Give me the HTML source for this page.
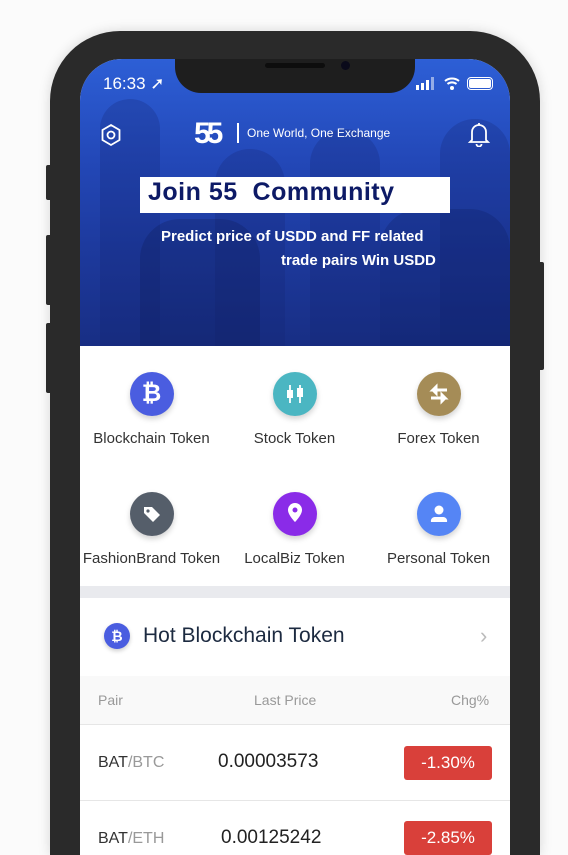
<!DOCTYPE html>
<html style="width:568px;height:855px;overflow:hidden"><head><meta charset="utf-8"><style>
*{margin:0;padding:0;box-sizing:border-box}
body{width:568px;height:855px;overflow:hidden;background:#fbfbfb;font-family:"Liberation Sans",sans-serif;position:relative}
.frame{position:absolute;left:50px;top:31px;width:490px;height:824px;background:#2a2a2a;border-radius:70px 70px 0 0;box-shadow:0 0 12px rgba(0,0,0,.15)}
.btn{position:absolute;background:#2a2a2a;width:6px;border-radius:2px}
.screen{position:absolute;left:80px;top:59px;width:430px;height:796px;background:#fff;border-radius:42px 42px 0 0;overflow:hidden}
.banner{position:absolute;left:0;top:0;width:430px;height:287px;overflow:hidden;background:linear-gradient(180deg,#2d5fd6 0%,#2348b8 35%,#1d3a9e 65%,#182e84 100%)}
.banner .sil{position:absolute;background:rgba(20,35,110,.25);border-radius:40px 40px 0 0}
.notch{position:absolute;left:95px;top:-2px;width:240px;height:36px;background:#1e1e1e;border-radius:0 0 26px 26px}
.w{color:#fff;position:absolute}
.icons{position:absolute;top:287px;left:0;width:430px}
.it{position:absolute;width:143px;text-align:center;font-size:15px;color:#333}
.ic{width:44px;height:44px;border-radius:50%;margin:0 auto 14px;display:flex;align-items:center;justify-content:center;box-shadow:0 3px 6px rgba(0,0,0,.18)}
</style></head><body>
<div class="frame"></div>
<div class="btn" style="left:46px;top:165px;height:35px"></div>
<div class="btn" style="left:46px;top:235px;height:70px"></div>
<div class="btn" style="left:46px;top:323px;height:70px"></div>
<div class="btn" style="left:538px;top:262px;height:108px"></div>
<div class="screen">
 <div class="banner">
  <div class="sil" style="left:20px;top:40px;width:60px;height:250px"></div>
  <div class="sil" style="left:135px;top:90px;width:70px;height:200px"></div>
  <div class="sil" style="left:230px;top:70px;width:70px;height:220px"></div>
  <div class="sil" style="left:360px;top:60px;width:70px;height:230px"></div>
  <div class="sil" style="left:60px;top:160px;width:120px;height:130px;background:rgba(10,25,80,.25)"></div>
  <div class="sil" style="left:300px;top:150px;width:130px;height:140px;background:rgba(10,25,80,.22)"></div>
 </div>
 <div class="notch"><div style="position:absolute;left:90px;top:6px;width:60px;height:5px;border-radius:3px;background:#0d0d0d"></div><div style="position:absolute;left:166px;top:4px;width:9px;height:9px;border-radius:50%;background:#0a0a1a"></div></div>
 <div class="w" style="left:23px;top:15px;font-size:17px">16:33 ➚</div>
 <svg class="w" style="left:336px;top:18px" width="60" height="14"><rect x="0" y="8" width="3" height="5" fill="#fff"/><rect x="5" y="6" width="3" height="7" fill="#fff"/><rect x="10" y="3" width="3" height="10" fill="#fff"/><rect x="15" y="0" width="3" height="13" fill="#fff" opacity=".5"/><path d="M29 4a11 11 0 0 1 14 0M31.5 7a7 7 0 0 1 9 0" stroke="#fff" stroke-width="2" fill="none"/><circle cx="36" cy="11" r="2" fill="#fff"/></svg>
 <div class="w" style="left:387px;top:18px;width:26px;height:13px;border:1.5px solid #fff;border-radius:4px;padding:1px"><div style="background:#fff;width:100%;height:100%;border-radius:2px"></div></div>
 <svg class="w" style="left:20px;top:64px" width="22" height="24"><path d="M11 2l8.5 5v10L11 22 2.5 17V7z" stroke="#fff" stroke-width="1.8" fill="none"/><circle cx="11" cy="12" r="3.5" stroke="#fff" stroke-width="1.8" fill="none"/></svg>
 <div class="w" style="left:114px;top:58px;font-size:30px;font-weight:bold;letter-spacing:-4px">55</div>
 <div class="w" style="left:157px;top:64px;width:1.5px;height:20px;background:#fff"></div>
 <div class="w" style="left:167px;top:67px;font-size:12px">One World, One Exchange</div>
 <svg class="w" style="left:387px;top:62px" width="24" height="26"><path d="M12 2v2M5 19V11a7 7 0 0 1 14 0v8l2 2H3z" stroke="#fff" stroke-width="1.8" fill="none"/><path d="M9.5 23a2.5 2.5 0 0 0 5 0" stroke="#fff" stroke-width="1.8" fill="none"/></svg>
 <div style="position:absolute;left:60px;top:118px;width:310px;height:36px;background:#fff"></div>
 <div style="position:absolute;left:68px;top:119px;font-size:25px;font-weight:bold;color:#0d1a66;letter-spacing:.5px;white-space:pre">Join 55  Community</div>
 <div class="w" style="left:81px;top:169px;font-size:15px;font-weight:bold">Predict  price of USDD and FF related</div>
 <div class="w" style="left:201px;top:193px;font-size:15px;font-weight:bold">trade pairs Win  USDD</div>
 <div class="icons">
  <div class="it" style="left:0;top:26px"><div class="ic" style="background:#4a5de0;color:#fff;font-weight:bold;font-size:24px">₿</div>Blockchain Token</div>
  <div class="it" style="left:143px;top:26px"><div class="ic" style="background:#4bb6c2"><svg width="24" height="24"><path d="M7 3v18M17 3v18" stroke="#fff" stroke-width="1.8"/><rect x="4" y="8" width="6" height="8" fill="#fff"/><rect x="14" y="6" width="6" height="9" fill="#fff"/></svg></div>Stock Token</div>
  <div class="it" style="left:287px;top:26px"><div class="ic" style="background:#a58c57"><svg width="24" height="22"><path d="M20 7H6l3-3v6l-3-3M4 15h14l-3-3v6l3-3" stroke="#fff" stroke-width="3" fill="none"/></svg></div>Forex Token</div>
  <div class="it" style="left:0;top:146px"><div class="ic" style="background:#555e6a"><svg width="24" height="24"><path d="M4 5h8l8 8-7 7-9-9z" fill="#fff"/><circle cx="8" cy="9" r="1.6" fill="#555e6a"/></svg></div>FashionBrand Token</div>
  <div class="it" style="left:143px;top:146px"><div class="ic" style="background:#8a2be8"><svg width="24" height="26"><path d="M12 21s-7-7-7-12a7 7 0 0 1 14 0c0 5-7 12-7 12z" fill="#fff"/><circle cx="12" cy="9" r="2.5" fill="#8a2be8"/></svg></div>LocalBiz Token</div>
  <div class="it" style="left:287px;top:146px"><div class="ic" style="background:#5585f5"><svg width="24" height="24"><circle cx="12" cy="8" r="4.5" fill="#fff"/><path d="M4 20a4 4 0 0 1 4-5h8a4 4 0 0 1 4 5z" fill="#fff"/></svg></div>Personal Token</div>
 </div>
 <div style="position:absolute;top:527px;left:0;width:430px;height:12px;background:#e9eaee"></div>
 <div style="position:absolute;left:24px;top:564px;width:26px;height:26px;border-radius:50%;background:#4a5de0;color:#fff;font-weight:bold;font-size:14px;text-align:center;line-height:26px;box-shadow:0 2px 4px rgba(0,0,0,.2)">₿</div>
 <div style="position:absolute;left:63px;top:565px;font-size:21px;color:#1c2a40">Hot Blockchain Token</div>
 <div style="position:absolute;left:400px;top:564px;font-size:22px;color:#bbb">›</div>
 <div style="position:absolute;left:0;top:617px;width:430px;height:49px;background:#f9f9f9;border-bottom:1px solid #e6e6e6"></div>
 <div style="position:absolute;left:18px;top:633px;font-size:14px;color:#999">Pair</div>
 <div style="position:absolute;left:174px;top:633px;font-size:14px;color:#999">Last Price</div>
 <div style="position:absolute;left:371px;top:633px;font-size:14px;color:#999">Chg%</div>
 <div style="position:absolute;left:18px;top:695px;font-size:16px;color:#333">BAT<span style="color:#999">/BTC</span></div>
 <div style="position:absolute;left:138px;top:692px;font-size:19px;color:#222">0.00003573</div>
 <div style="position:absolute;left:324px;top:687px;width:88px;height:34px;background:#d9403a;border-radius:3px;color:#fff;font-size:17px;text-align:center;line-height:34px">-1.30%</div>
 <div style="position:absolute;left:0;top:741px;width:430px;height:1px;background:#e6e6e6"></div>
 <div style="position:absolute;left:18px;top:771px;font-size:16px;color:#333">BAT<span style="color:#999">/ETH</span></div>
 <div style="position:absolute;left:141px;top:768px;font-size:19px;color:#222">0.00125242</div>
 <div style="position:absolute;left:324px;top:762px;width:88px;height:34px;background:#d9403a;border-radius:3px;color:#fff;font-size:17px;text-align:center;line-height:34px">-2.85%</div>
</div>
</body></html>
